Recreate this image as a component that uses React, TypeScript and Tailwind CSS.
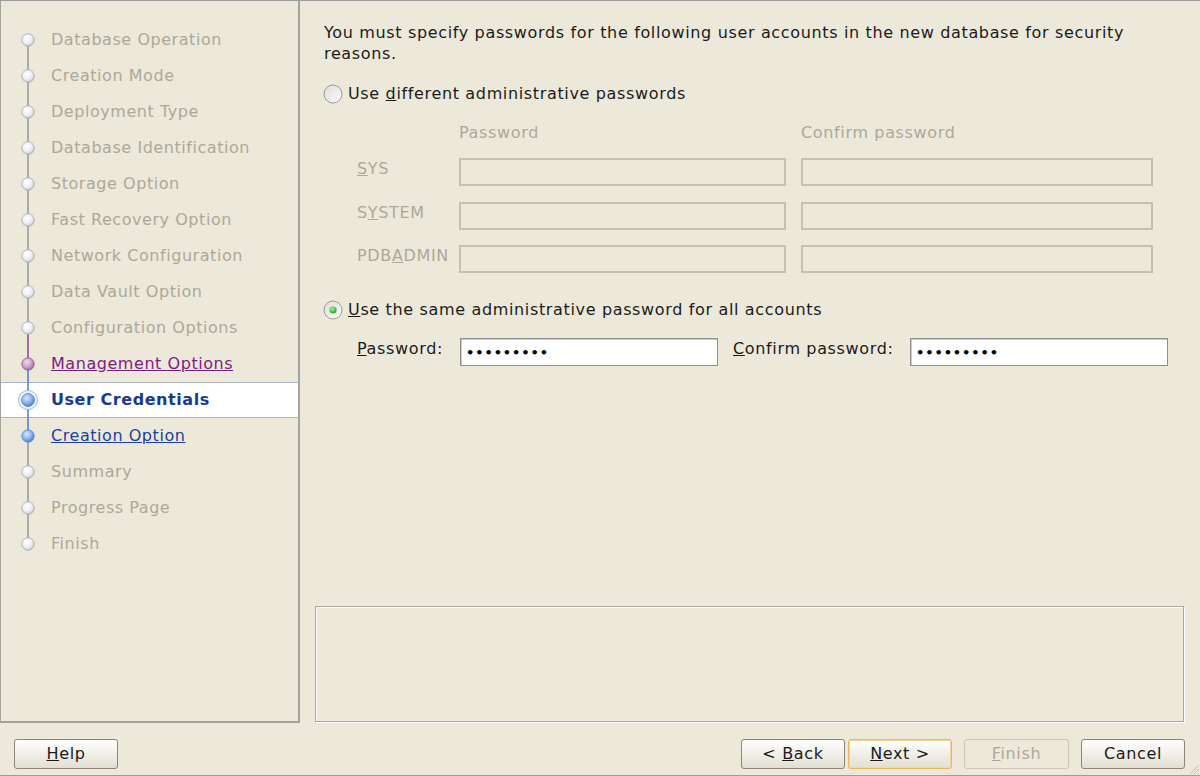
import React from 'react';

type Step = {
  label: string;
  state: 'off' | 'visited' | 'current' | 'link';
  top: string;
  bottom: string;
};

const GREY = '#9c9c9c';
const PURPLE = '#94489a';
const BLUE = '#5282d4';

const steps: Step[] = [
  { label: 'Database Operation', state: 'off', top: '', bottom: GREY },
  { label: 'Creation Mode', state: 'off', top: GREY, bottom: GREY },
  { label: 'Deployment Type', state: 'off', top: GREY, bottom: GREY },
  { label: 'Database Identification', state: 'off', top: GREY, bottom: GREY },
  { label: 'Storage Option', state: 'off', top: GREY, bottom: GREY },
  { label: 'Fast Recovery Option', state: 'off', top: GREY, bottom: GREY },
  { label: 'Network Configuration', state: 'off', top: GREY, bottom: GREY },
  { label: 'Data Vault Option', state: 'off', top: GREY, bottom: GREY },
  { label: 'Configuration Options', state: 'off', top: GREY, bottom: PURPLE },
  { label: 'Management Options', state: 'visited', top: PURPLE, bottom: BLUE },
  { label: 'User Credentials', state: 'current', top: BLUE, bottom: BLUE },
  { label: 'Creation Option', state: 'link', top: BLUE, bottom: GREY },
  { label: 'Summary', state: 'off', top: GREY, bottom: GREY },
  { label: 'Progress Page', state: 'off', top: GREY, bottom: GREY },
  { label: 'Finish', state: 'off', top: GREY, bottom: '' },
];

const font = { fontFamily: '"DejaVu Sans", Verdana, sans-serif' };

function Node({ step }: { step: Step }) {
  const fill =
    step.state === 'visited' ? 'url(#gPurple)' : step.state === 'off' ? 'url(#gGrey)' : 'url(#gBlue)';
  const stroke = step.state === 'visited' ? '#8a5a8e' : step.state === 'off' ? '#a4a4ac' : '#5b87c8';
  return (
    <svg width="30" height="36" viewBox="0 0 30 36" className="shrink-0">
      {step.top && <line x1="15" y1="0" x2="15" y2="18" stroke={step.top} strokeWidth="1.6" />}
      {step.bottom && <line x1="15" y1="18" x2="15" y2="36" stroke={step.bottom} strokeWidth="1.6" />}
      {step.state === 'current' && <circle cx="15" cy="18" r="9.5" fill="#eef4fd" stroke="#9db7dd" strokeWidth="1" />}
      <circle cx="15" cy="18" r={step.state === 'current' ? 6.5 : 6.2} fill={fill} stroke={stroke} strokeWidth="0.8" />
    </svg>
  );
}

function Sidebar() {
  return (
    <div className="w-[300px] h-full shrink-0 border-l border-r-2 border-b-2 border-[#a3a29b] pt-[21px] tracking-[0.55px]">
      <svg width="0" height="0" className="absolute">
        <defs>
          <radialGradient id="gGrey" cx="0.4" cy="0.35" r="0.7">
            <stop offset="0" stopColor="#ffffff" />
            <stop offset="0.6" stopColor="#eceef4" />
            <stop offset="1" stopColor="#bfc1cc" />
          </radialGradient>
          <radialGradient id="gPurple" cx="0.4" cy="0.35" r="0.7">
            <stop offset="0" stopColor="#f0dcef" />
            <stop offset="0.6" stopColor="#c69ac7" />
            <stop offset="1" stopColor="#9a5c9c" />
          </radialGradient>
          <radialGradient id="gBlue" cx="0.4" cy="0.35" r="0.7">
            <stop offset="0" stopColor="#dde9ff" />
            <stop offset="0.6" stopColor="#84acef" />
            <stop offset="1" stopColor="#3f74cf" />
          </radialGradient>
        </defs>
      </svg>
      {steps.map((s) => (
        <div
          key={s.label}
          className={`flex items-center h-[36px] pl-[12px] gap-[8px] ${
            s.state === 'current' ? 'bg-white border-y border-[#a9b6cc]' : ''
          }`}
        >
          <Node step={s} />
          <span
            className={
              s.state === 'current'
                ? 'font-bold text-[#183a94]'
                : s.state === 'visited'
                ? 'underline text-[#7d1c82]'
                : s.state === 'link'
                ? 'underline text-[#1d3f9e]'
                : 'text-[#aca899]'
            }
          >
            {s.label}
          </span>
        </div>
      ))}
    </div>
  );
}

function Radio({ checked }: { checked?: boolean }) {
  return (
    <svg width="20" height="20" viewBox="0 0 20 20" className="shrink-0">
      <defs>
        <linearGradient id="rg" x1="0" y1="0" x2="1" y2="1">
          <stop offset="0" stopColor="#dcdbd3" />
          <stop offset="1" stopColor="#ffffff" />
        </linearGradient>
        <radialGradient id="dot" cx="0.4" cy="0.35" r="0.7">
          <stop offset="0" stopColor="#9ef09e" />
          <stop offset="1" stopColor="#23a023" />
        </radialGradient>
      </defs>
      <circle cx="10" cy="10" r="9" fill="url(#rg)" stroke="#9a9a94" strokeWidth="1" />
      {checked && <circle cx="10" cy="10" r="3.6" fill="url(#dot)" />}
    </svg>
  );
}

function DisabledBox({ w }: { w: string }) {
  return <div className={`${w} h-[28px] border-2 border-[#c3c1b1] shrink-0`} />;
}

function PwBox() {
  return (
    <div className="w-[258px] h-[28px] bg-white border border-[#8f8f8f] shadow-[inset_1px_1px_0_#c9c9c9] flex items-center pl-[5px] shrink-0">
      <span className="text-[13px] font-bold tracking-[0.9px] leading-none text-black">•••••••••</span>
    </div>
  );
}

function Btn({ children, w, variant }: { children: React.ReactNode; w: string; variant?: 'focus' | 'disabled' }) {
  const cls =
    variant === 'disabled'
      ? 'border-[#c9c7b9] text-[#aca899] bg-[#ece9da]'
      : variant === 'focus'
      ? 'border-[#e9b660] shadow-[inset_0_0_0_1px_#f6d896] text-[#1a1a1a] bg-gradient-to-b from-white to-[#e2dfd1]'
      : 'border-[#878680] text-[#1a1a1a] bg-gradient-to-b from-white to-[#e2dfd1]';
  return (
    <div className={`${w} h-[30px] rounded-[3px] border flex items-center justify-center ${cls}`}>{children}</div>
  );
}

export default function App() {
  return (
    <div
      className="relative w-[1200px] h-[776px] bg-[#ece9da] text-[16px] tracking-[0.65px] text-[#1b1b1b] border-t border-b border-[#9c9c98] flex flex-col overflow-hidden"
      style={font}
    >
      <div className="flex h-[722px]">
        <Sidebar />
        <div className="flex-1 flex flex-col pt-[21px] pb-[1px]">
          <div className="pl-[24px] pr-[24px] leading-[21px]">
            <p>You must specify passwords for the following user accounts in the new database for security reasons.</p>
            <div className="flex items-center gap-[5px] mt-[19px] -ml-[1px] h-[21px]">
              <Radio />
              <span>
                Use <u>d</u>ifferent administrative passwords
              </span>
            </div>

            <div className="text-[#aca899]">
              <div className="flex mt-[18px] h-[21px] items-center">
                <div className="w-[135px]" />
                <div className="w-[342px]">Password</div>
                <div>Confirm password</div>
              </div>
              {[
                ['S', 'YS', '', 'mt-[15px]'],
                ['S', 'Y', 'STEM', 'mt-[16px]'],
                ['PDB', 'A', 'DMIN', 'mt-[15px]'],
              ].map(([a, b, c, m], i) => (
                <div key={i} className={`flex ${m}`}>
                  <div className="w-[135px] pl-[33px] leading-[21px] pt-0">
                    {i === 0 ? (
                      <>
                        <u>S</u>YS
                      </>
                    ) : (
                      <>
                        {a}
                        <u>{b}</u>
                        {c}
                      </>
                    )}
                  </div>
                  <DisabledBox w="w-[327px]" />
                  <div className="w-[15px]" />
                  <DisabledBox w="w-[352px]" />
                </div>
              ))}
            </div>

            <div className="flex items-center gap-[5px] mt-[26px] -ml-[1px] h-[21px]">
              <Radio checked />
              <span>
                <u>U</u>se the same administrative password for all accounts
              </span>
            </div>
            <div className="flex items-start mt-[18px]">
              <div className="w-[136px] pl-[33px] leading-[21px]">
                <u>P</u>assword:
              </div>
              <PwBox />
              <div className="w-[192px] pl-[15px] leading-[21px]">
                <u>C</u>onfirm password:
              </div>
              <PwBox />
            </div>
          </div>

          <div className="mt-auto ml-[15px] mr-[16px] h-[116px] border border-[#a7a69f] shadow-[inset_1px_1px_0_#ffffff,1px_1px_0_#ffffff]" />
        </div>
      </div>

      <div className="flex items-start pt-[16px] pl-[14px] pr-[15px] flex-1">
        <Btn w="w-[104px]">
          <span>
            <u>H</u>elp
          </span>
        </Btn>
        <div className="flex-1" />
        <div className="flex gap-[3px]">
          <Btn w="w-[104px]">
            <span>
              &lt; <u>B</u>ack
            </span>
          </Btn>
          <Btn w="w-[104px]" variant="focus">
            <span>
              <u>N</u>ext &gt;
            </span>
          </Btn>
        </div>
        <div className="w-[12px]" />
        <Btn w="w-[105px]" variant="disabled">
          <span>
            <u>F</u>inish
          </span>
        </Btn>
        <div className="w-[12px]" />
        <Btn w="w-[104px]">
          <span>Cancel</span>
        </Btn>
      </div>

      <svg width="12" height="12" viewBox="0 0 12 12" className="absolute right-0 bottom-0">
        <line x1="11" y1="2" x2="2" y2="11" stroke="#c2c0b2" strokeWidth="1" />
        <line x1="11" y1="6" x2="6" y2="11" stroke="#c2c0b2" strokeWidth="1" />
        <line x1="11" y1="10" x2="10" y2="11" stroke="#c2c0b2" strokeWidth="1" />
      </svg>
    </div>
  );
}
